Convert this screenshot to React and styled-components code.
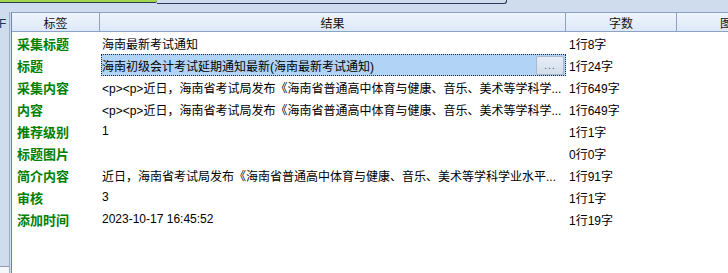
import React from "react"
import styled, { createGlobalStyle } from "styled-components"

const rows = [
  { label: "采集标题", value: "海南最新考试通知", count: "1行8字" },
  { label: "标题", value: "海南初级会计考试延期通知最新(海南最新考试通知)", count: "1行24字", selected: true },
  { label: "采集内容", value: "<p><p>近日，海南省考试局发布《海南省普通高中体育与健康、音乐、美术等学科学...", count: "1行649字" },
  { label: "内容", value: "<p><p>近日，海南省考试局发布《海南省普通高中体育与健康、音乐、美术等学科学...", count: "1行649字" },
  { label: "推荐级别", value: "1", count: "1行1字" },
  { label: "标题图片", value: "", count: "0行0字" },
  { label: "简介内容", value: "近日，海南省考试局发布《海南省普通高中体育与健康、音乐、美术等学科学业水平...", count: "1行91字" },
  { label: "审核", value: "3", count: "1行1字" },
  { label: "添加时间", value: "2023-10-17 16:45:52", count: "1行19字" },
]

const App = () => {
  return (
    <>
      <GlobalStyle />
      <Page>
        <TabStrip>
          <ActiveTab />
          <OtherTab />
        </TabStrip>
        <Main>
          <LeftPane>
            <PaneText>F</PaneText>
            <PaneFoot />
          </LeftPane>
          <Grid>
            <HeaderRow>
              <HeaderCell>标签</HeaderCell>
              <HeaderCell>结果</HeaderCell>
              <HeaderCell>字数</HeaderCell>
              <HeaderCell align="left">图片</HeaderCell>
            </HeaderRow>
            {rows.map((row, index) => (
              <Row key={index}>
                <LabelCell>{row.label}</LabelCell>
                <ValueCell selected={row.selected}>
                  <ValueText>{row.value}</ValueText>
                  {row.selected && <EditButton>...</EditButton>}
                </ValueCell>
                <CountCell>{row.count}</CountCell>
                <ExtraCell />
              </Row>
            ))}
          </Grid>
        </Main>
      </Page>
    </>
  )
}

export default App

const GlobalStyle = createGlobalStyle`
  body {
    margin: 0;
    background: #cfdcee;
    font-family: "Liberation Sans", "Noto Sans CJK SC", sans-serif;
  }
`
const Page = styled.div`
  width: 728px;
  height: 273px;
  overflow: hidden;
  display: flex;
  flex-direction: column;
  background: #cfdcee;
`
const TabStrip = styled.div`
  display: flex;
  height: 4px;
  margin-bottom: 8px;
`
const ActiveTab = styled.div`
  width: 157px;
  height: 2px;
  background: #a6d64c;
  border-bottom: 1px solid #2a3c55;
  border-bottom-right-radius: 2px;
`
const OtherTab = styled.div`
  width: 349px;
  height: 3px;
  border-bottom: 1px solid #2a3c55;
  border-right: 1px solid #2a3c55;
  border-bottom-right-radius: 3px;
`
const Main = styled.div`
  flex: 1;
  display: flex;
  min-height: 0;
`
const LeftPane = styled.div`
  width: 9px;
  display: flex;
  flex-direction: column;
  border-right: 1px solid #a0afc6;
  margin-right: 1px;
`
const PaneText = styled.div`
  font-size: 12px;
  color: #1f3550;
  padding-top: 5px;
  margin-left: -1px;
`
const PaneFoot = styled.div`
  margin-top: auto;
  height: 6px;
  border-top: 1px solid #8d9bb1;
  background: #f4f6fa;
`
const Grid = styled.div`
  flex: 1;
  background: #fff;
  border-left: 1px solid #6d86aa;
  border-top: 1px solid #8aa2c6;
  overflow: hidden;
`
const columns = "88px 466px 111px 120px"

const HeaderRow = styled.div`
  display: grid;
  grid-template-columns: ${columns};
  height: 18px;
  background: linear-gradient(#eef4fd, #dde8f8);
  border-bottom: 1px solid #8aa2c6;
`
const HeaderCell = styled.div`
  display: flex;
  align-items: center;
  justify-content: ${({ align }) => (align === "left" ? "flex-start" : "center")};
  padding-left: ${({ align }) => (align === "left" ? "43px" : "0")};
  font-size: 12px;
  color: #111;
  border-right: 1px solid #8aa2c6;
  white-space: nowrap;
`
const Row = styled.div`
  display: grid;
  grid-template-columns: ${columns};
  height: 22px;
`
const LabelCell = styled.div`
  display: flex;
  align-items: center;
  padding-left: 5px;
  font-size: 13px;
  font-weight: bold;
  color: #008000;
  white-space: nowrap;
`
const ValueCell = styled.div`
  display: flex;
  align-items: center;
  padding-left: 1px;
  margin-left: 1px;
  min-width: 0;
  background: ${({ selected }) => (selected ? "#b1d3f5" : "transparent")};
  outline: ${({ selected }) => (selected ? "1px dotted #1b2a44" : "none")};
  outline-offset: -1px;
`
const ValueText = styled.span`
  flex: 1;
  font-size: 12px;
  color: #000;
  white-space: nowrap;
  overflow: hidden;
`
const EditButton = styled.div`
  width: 26px;
  height: 17px;
  margin-right: 2px;
  display: flex;
  align-items: center;
  justify-content: center;
  font-size: 10px;
  letter-spacing: 1px;
  color: #4a5a70;
  background: linear-gradient(#e6edf6, #d3deeb);
  border: 1px solid #a9b8cb;
  border-radius: 2px;
`
const CountCell = styled.div`
  display: flex;
  align-items: center;
  padding-left: 3px;
  font-size: 12px;
  color: #000;
  white-space: nowrap;
`
const ExtraCell = styled.div``
